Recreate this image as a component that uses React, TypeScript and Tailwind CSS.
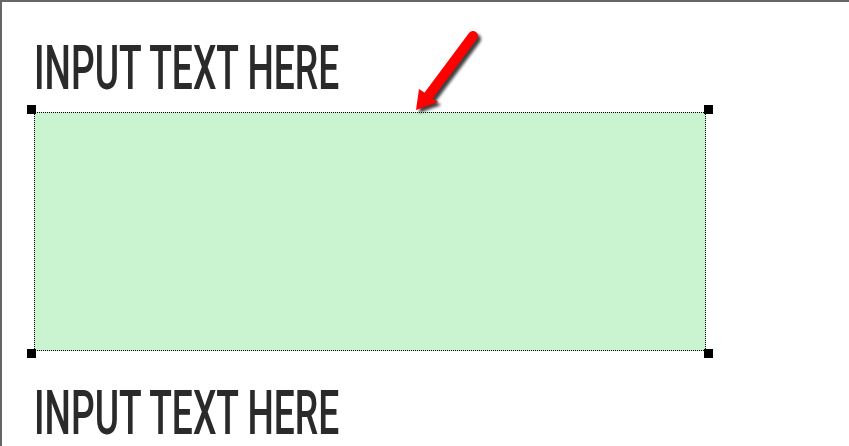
const Handle = ({ pos }: { pos: string }) => (
  <span className={`absolute h-[9px] w-[9px] bg-black ${pos}`} />
);

const Heading = () => (
  <h1 className="h-[52px] whitespace-nowrap font-['Roboto',sans-serif] text-[62px] font-medium leading-[52px] text-[#2a2a2a] origin-left scale-x-[0.6] [text-shadow:0_0_1px_rgba(0,0,0,0.15)]">
    INPUT TEXT HERE
  </h1>
);

export default function App() {
  return (
    <div className="relative h-[446px] w-[849px] overflow-hidden border-l-2 border-t-2 border-[#666666] bg-white">
      <div className="flex flex-col px-[32px] pt-[40px]">
        <Heading />

        <div className="relative mt-[18px] h-[239px] w-[672px] border border-dotted border-black bg-[#caf4cf]">
          <Handle pos="-left-[8px] -top-[8px]" />
          <Handle pos="-right-[8px] -top-[8px]" />
          <Handle pos="-left-[8px] -bottom-[8px]" />
          <Handle pos="-right-[8px] -bottom-[8px]" />
        </div>

        <div className="mt-[36px]">
          <Heading />
        </div>
      </div>

      {/* red callout arrow */}
      <svg
        className="absolute left-[398px] top-[18px]"
        width="100"
        height="100"
        viewBox="0 0 100 100"
      >
        <defs>
          <filter id="shadow" x="-30%" y="-30%" width="160%" height="160%">
            <feGaussianBlur stdDeviation="1.6" />
          </filter>
        </defs>
        <g transform="translate(3 3)" filter="url(#shadow)" opacity="0.75">
          <line x1="73" y1="16" x2="29" y2="75" stroke="#000" strokeWidth="10" strokeLinecap="round" />
          <polygon points="19,69 38,82 16,90" fill="#000" />
        </g>
        <line x1="73" y1="16" x2="29" y2="75" stroke="#ff0000" strokeWidth="10" strokeLinecap="round" />
        <polygon points="19,69 38,82 16,90" fill="#ff0000" />
      </svg>
    </div>
  );
}
